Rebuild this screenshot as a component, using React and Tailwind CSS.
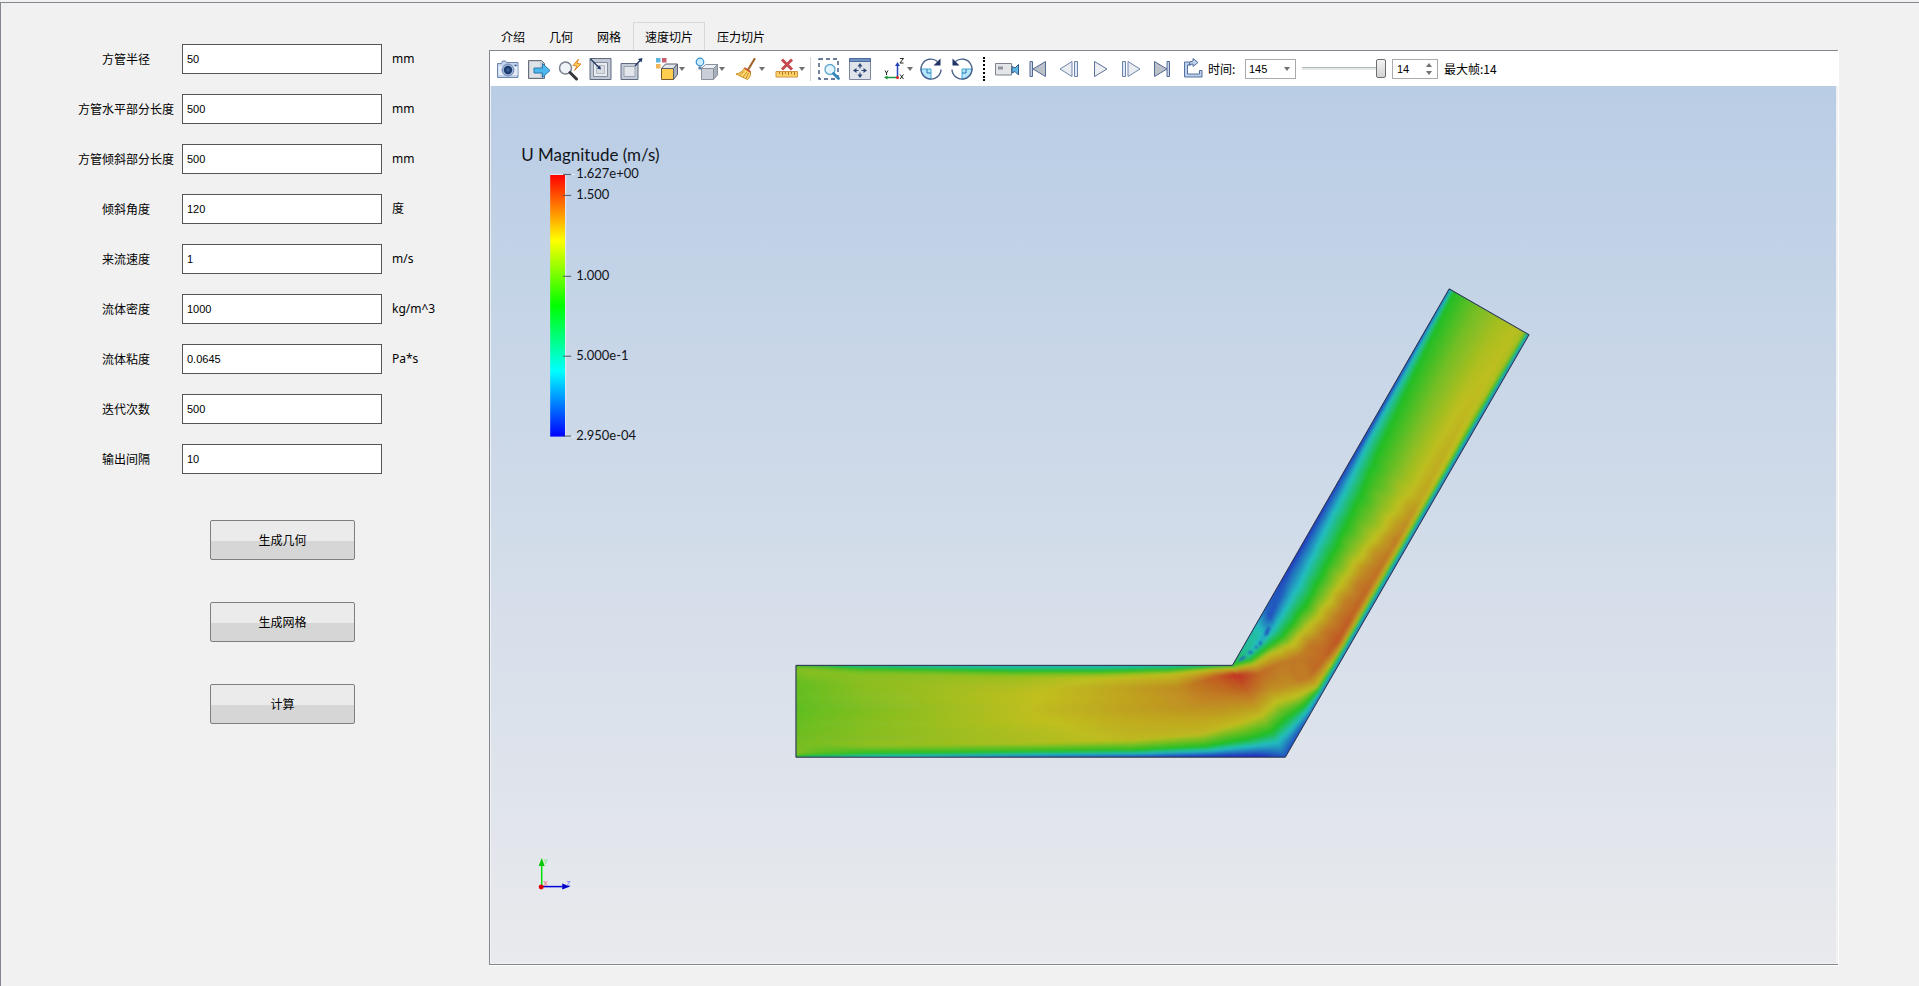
import React, { useState } from 'react';

const FIELDS = [
  { id: 'radius', label: '方管半径', value: '50', unit: 'mm' },
  { id: 'flatLength', label: '方管水平部分长度', value: '500', unit: 'mm' },
  { id: 'slopeLength', label: '方管倾斜部分长度', value: '500', unit: 'mm' },
  { id: 'angle', label: '倾斜角度', value: '120', unit: '度' },
  { id: 'velocity', label: '来流速度', value: '1', unit: 'm/s' },
  { id: 'density', label: '流体密度', value: '1000', unit: 'kg/m^3' },
  { id: 'viscosity', label: '流体粘度', value: '0.0645', unit: 'Pa*s' },
  { id: 'iterations', label: '迭代次数', value: '500', unit: '' },
  { id: 'interval', label: '输出间隔', value: '10', unit: '' },
];

const ACTIONS = ['生成几何', '生成网格', '计算'];
const TABS = ['介绍', '几何', '网格', '速度切片', '压力切片'];

// Cross-section profiles along the duct. s: 0 inlet, 1 bend, 2 outlet.
// n: position from upper wall to lower wall, v: normalised speed.
const STATIONS = [
  { s: 0, n: [0, 0.01, 0.02, 0.04, 0.08, 0.2, 0.5, 0.85, 0.96, 0.98, 1], v: [0.5, 0.58, 0.62, 0.65, 0.64, 0.61, 0.6, 0.63, 0.66, 0.6, 0.5] },
  { s: 0.03, n: [0, 0.01, 0.02, 0.04, 0.08, 0.2, 0.5, 0.85, 0.96, 0.98, 1], v: [0.35, 0.5, 0.6, 0.65, 0.66, 0.62, 0.61, 0.64, 0.62, 0.5, 0.35] },
  { s: 0.15, n: [0, 0.02, 0.035, 0.06, 0.1, 0.2, 0.5, 0.88, 0.97, 0.985, 1], v: [0.25, 0.4, 0.5, 0.6, 0.66, 0.67, 0.65, 0.67, 0.5, 0.35, 0.2] },
  { s: 0.5, n: [0, 0.03, 0.065, 0.09, 0.13, 0.25, 0.5, 0.85, 0.945, 0.975, 1], v: [0.2, 0.33, 0.5, 0.6, 0.69, 0.735, 0.75, 0.72, 0.5, 0.25, 0.08] },
  { s: 0.7, n: [0, 0.03, 0.065, 0.1, 0.14, 0.25, 0.5, 0.81, 0.93, 0.965, 1], v: [0.2, 0.33, 0.5, 0.65, 0.75, 0.785, 0.79, 0.76, 0.5, 0.25, 0.04] },
  { s: 0.85, n: [0, 0.02, 0.05, 0.08, 0.11, 0.25, 0.45, 0.75, 0.885, 0.935, 1], v: [0.22, 0.35, 0.5, 0.66, 0.76, 0.83, 0.82, 0.76, 0.5, 0.25, 0] },
  { s: 0.95, n: [0, 0.01, 0.02, 0.04, 0.06, 0.13, 0.3, 0.62, 0.8, 0.88, 1], v: [0.3, 0.4, 0.5, 0.68, 0.78, 0.91, 0.87, 0.76, 0.5, 0.25, 0] },
  { s: 1, n: [0, 0.01, 0.02, 0.03, 0.05, 0.1, 0.26, 0.54, 0.73, 0.84, 1], v: [0.4, 0.5, 0.6, 0.7, 0.8, 0.98, 0.9, 0.76, 0.5, 0.25, 0.08] },
  { s: 1.05, n: [0, 0.05, 0.1, 0.15, 0.2, 0.3, 0.48, 0.63, 0.8, 0.91, 1], v: [0.3, 0.33, 0.28, 0.5, 0.76, 0.89, 0.83, 0.74, 0.5, 0.25, 0.06] },
  { s: 1.1, n: [0, 0.08, 0.15, 0.23, 0.3, 0.42, 0.65, 0.79, 0.9, 0.96, 1], v: [0.28, 0.3, 0.2, 0.5, 0.75, 0.86, 0.83, 0.74, 0.5, 0.25, 0.12] },
  { s: 1.15, n: [0, 0.1, 0.2, 0.32, 0.43, 0.58, 0.8, 0.91, 0.95, 0.98, 1], v: [0.12, 0.07, 0.25, 0.5, 0.74, 0.86, 0.87, 0.76, 0.5, 0.25, 0.1] },
  { s: 1.25, n: [0, 0.07, 0.2, 0.37, 0.55, 0.7, 0.87, 0.93, 0.96, 0.98, 1], v: [0.02, 0.12, 0.25, 0.5, 0.75, 0.85, 0.92, 0.8, 0.5, 0.25, 0.1] },
  { s: 1.4, n: [0, 0.04, 0.14, 0.33, 0.61, 0.73, 0.87, 0.93, 0.96, 0.98, 1], v: [0.02, 0.1, 0.25, 0.5, 0.75, 0.83, 0.88, 0.78, 0.5, 0.25, 0.1] },
  { s: 1.5, n: [0, 0.04, 0.12, 0.29, 0.67, 0.77, 0.88, 0.93, 0.96, 0.98, 1], v: [0.03, 0.12, 0.26, 0.5, 0.74, 0.8, 0.85, 0.77, 0.5, 0.25, 0.1] },
  { s: 1.6, n: [0, 0.03, 0.07, 0.22, 0.6, 0.77, 0.87, 0.93, 0.96, 0.98, 1], v: [0.03, 0.1, 0.25, 0.5, 0.69, 0.76, 0.79, 0.75, 0.5, 0.25, 0.08] },
  { s: 1.8, n: [0, 0.02, 0.05, 0.13, 0.4, 0.72, 0.85, 0.92, 0.96, 0.98, 1], v: [0.04, 0.12, 0.27, 0.5, 0.63, 0.745, 0.76, 0.73, 0.5, 0.25, 0.08] },
  { s: 2, n: [0, 0.015, 0.03, 0.06, 0.35, 0.65, 0.85, 0.94, 0.97, 0.985, 1], v: [0.06, 0.17, 0.32, 0.5, 0.63, 0.71, 0.74, 0.71, 0.5, 0.3, 0.1] },
];

const OUTLINE = '796,666 1233,666 1450,289 1530,335 1286,758 796,758';

const lerp = (a, b, t) => a + (b - a) * t;

function profileAt(s) {
  let i = 0;
  while (i < STATIONS.length - 2 && STATIONS[i + 1].s < s) i++;
  const a = STATIONS[i];
  const b = STATIONS[i + 1];
  const t = (s - a.s) / (b.s - a.s);
  return {
    n: a.n.map((n, k) => lerp(n, b.n[k], t)),
    v: a.v.map((v, k) => lerp(v, b.v[k], t)),
  };
}

function sample({ n, v }, x) {
  let i = 0;
  while (i < n.length - 2 && n[i + 1] < x) i++;
  const t = (x - n[i]) / (n[i + 1] - n[i]);
  return lerp(v[i], v[i + 1], Math.min(1, Math.max(0, t)));
}

const RAMP = [[34, 34, 190], [34, 192, 192], [34, 192, 34], [194, 192, 32], [196, 34, 34]];

function speedColor(v) {
  const p = Math.min(0.999, Math.max(0, v)) * 4;
  const i = Math.floor(p);
  const [r, g, b] = RAMP[i].map((c, k) => Math.round(lerp(c, RAMP[i + 1][k], p - i)));
  return `rgb(${r},${g},${b})`;
}

function ductPoint(s, n) {
  const wall = s <= 1
    ? [796 + 437 * s, 666, 796 + 490 * s, 758]
    : [1233 + 217 * (s - 1), 666 - 377 * (s - 1), 1286 + 244 * (s - 1), 758 - 423 * (s - 1)];
  return [lerp(wall[0], wall[2], n), lerp(wall[1], wall[3], n)];
}

const COLS = 220;
const ROWS = 60;

function buildCells() {
  const cells = [];
  for (let c = 0; c < COLS; c++) {
    const s0 = (c / COLS) * 2;
    const s1 = ((c + 1) / COLS) * 2;
    const mid = (s0 + s1) / 2;
    const profile = profileAt(mid);
    for (let r = 0; r < ROWS; r++) {
      const n0 = r / ROWS;
      const n1 = (r + 1) / ROWS;
      const n = (n0 + n1) / 2;
      // the shear layer behind the bend is slightly ragged
      const ragged = mid > 1.12 && mid < 1.6
        ? (Math.sin(mid * 97 + n * 9) + Math.sin(mid * 161 - n * 14)) * 0.005 * Math.sin(n * Math.PI)
        : 0;
      cells.push({
        points: [ductPoint(s0, n0), ductPoint(s1, n0), ductPoint(s1, n1), ductPoint(s0, n1)]
          .map(([x, y]) => `${x.toFixed(1)},${y.toFixed(1)}`).join(' '),
        color: speedColor(sample(profile, n) + ragged),
      });
    }
  }
  return cells;
}

const CELLS = buildCells();

const TICKS = [
  { y: 174, text: '1.627e+00' },
  { y: 195, text: '1.500' },
  { y: 276, text: '1.000' },
  { y: 356, text: '5.000e-1' },
  { y: 436, text: '2.950e-04' },
];

function FlowScene() {
  return (
    <svg viewBox="491 86 1346 878" className="absolute inset-0 h-full w-full" role="img" aria-label="U Magnitude (m/s)">
      <defs>
        <linearGradient id="legend" x1="0" y1="0" x2="0" y2="1">
          <stop offset="0" stopColor="#ff0000" />
          <stop offset="0.25" stopColor="#ffff00" />
          <stop offset="0.5" stopColor="#00ff00" />
          <stop offset="0.75" stopColor="#00ffff" />
          <stop offset="1" stopColor="#0000ff" />
        </linearGradient>
        <clipPath id="duct"><polygon points={OUTLINE} /></clipPath>
        <filter id="smooth" x="-2%" y="-2%" width="104%" height="104%"><feGaussianBlur stdDeviation="0.8" /></filter>
      </defs>

      <g clipPath="url(#duct)">
        <polygon points={OUTLINE} fill="#2262be" />
        <g filter="url(#smooth)" strokeWidth="0.8">
          {CELLS.map((cell, i) => (
            <polygon key={i} points={cell.points} fill={cell.color} stroke={cell.color} />
          ))}
          <g fill="#2258be">
            <ellipse cx="1243" cy="659" rx="4" ry="1.3" transform="rotate(-35 1243 659)" />
            <ellipse cx="1251" cy="653" rx="2.5" ry="1.6" />
            <ellipse cx="1257" cy="648" rx="1.6" ry="1.4" />
            <ellipse cx="1261" cy="644" rx="1.6" ry="2.4" />
            <ellipse cx="1268" cy="632" rx="2" ry="5" transform="rotate(25 1268 632)" />
          </g>
        </g>
      </g>
      <polygon points={OUTLINE} fill="none" stroke="#2b2f4a" />

      <g className="font-['Lato',sans-serif]" fill="#10141a">
        <text x="521" y="161" fontSize="17">U Magnitude (m/s)</text>
        <rect x="550" y="175" width="15" height="262" fill="url(#legend)" />
        <path d="M550.5 174.5H575M565.5 175V437H575" fill="none" stroke="#e8ecf4" />
        {TICKS.map((tick) => (
          <g key={tick.text}>
            <path d={`M563 ${tick.y + 0.5}H571`} stroke="#4d5560" />
            <text x="576" y={tick.y + 4} fontSize="13">{tick.text}</text>
          </g>
        ))}
      </g>

      <g className="font-['Liberation_Sans',sans-serif]" fontSize="7">
        <path d="M541.5 887V866" stroke="#00e000" strokeWidth="1.5" />
        <path d="M541.5 859l3 8h-6z" fill="#00c800" />
        <path d="M542 887.5H562" stroke="#0000d8" strokeWidth="1.5" />
        <path d="M570 887.5l-8 -3v6z" fill="#0000c8" />
        <circle cx="541" cy="888" r="2.5" fill="#e00000" />
        <text x="543" y="865" fill="#5ee65e">Y</text>
        <text x="543" y="887" fill="#f06060">X</text>
        <text x="566" y="887" fill="#6a6af0">Z</text>
      </g>
    </svg>
  );
}

function Icon({ children }) {
  return (
    <svg viewBox="0 0 24 24" className="h-6 w-6 shrink-0" fill="none" aria-hidden="true">{children}</svg>
  );
}

const CameraIcon = (
  <Icon>
    <path d="M1.5 6.5h4l1-2.500h3l1 1.500h11.500v15h-20.500z" fill="#c3d3ec" stroke="#6d84ad" strokeLinejoin="round" />
    <path d="M2.500 9h19v9h-19z" fill="#e4ecf8" />
    <circle cx="12" cy="13" r="6" fill="#9fb4d6" stroke="#7189b4" />
    <circle cx="12" cy="13" r="4.200" fill="#1d3a6c" />
    <circle cx="12" cy="13" r="1.800" fill="#3b629f" />
    <path d="M18.500 8.500h2" stroke="#2f4f86" strokeWidth="1.500" />
  </Icon>
);
const ExportIcon = (
  <Icon>
    <path d="M1.500 3.500h13l3 3v15h-16z" fill="#c6cbd3" stroke="#6a707b" />
    <path d="M3 5h10v15h-10z" fill="#dfe3e8" />
    <path d="M7 11h8.500v-4.500l7.500 7-7.500 7v-4.500h-8.500z" fill="#4db8ee" stroke="#2879ad" />
  </Icon>
);
const FlashSearchIcon = (
  <Icon>
    <circle cx="7.500" cy="11" r="6" fill="#eef3f8" stroke="#7b828d" strokeWidth="1.500" />
    <path d="M12 15.500l6.500 6.500" stroke="#33373d" strokeWidth="3" strokeLinecap="round" />
    <path d="M20.500 2l-5.500 6.500 4 .5-2.500 4.500 6.500-6.500-4-.5z" fill="#ffd45a" stroke="#e0812b" />
  </Icon>
);
const CornerInIcon = (
  <Icon>
    <path d="M1 1.500h21v21h-21z" fill="#c2c9d5" stroke="#5f6b80" />
    <path d="M4.500 5.500h14v14h-14z" fill="#e8ebf0" stroke="#828da0" />
    <path d="M7.500 8.500h8v8h-8z" fill="#d8dce3" stroke="#b3bac5" />
    <path d="M1.500 2l9 9" stroke="#1f3564" strokeWidth="1.300" />
    <path d="M12 12.500l-4-1 3-3z" fill="#1f3564" />
  </Icon>
);
const CornerOutIcon = (
  <Icon>
    <path d="M1 6.500h17v16h-17z" fill="#c6ccd7" stroke="#5f6b80" />
    <path d="M4 9.500h11v10h-11z" fill="#e3e7ec" stroke="#9aa3b2" />
    <path d="M15 9l5.500-6" stroke="#1f3564" strokeWidth="1.300" />
    <path d="M22.500 1l-1 4.500-3.500-3.500z" fill="#1f3564" />
  </Icon>
);
const ColorCubeIcon = (
  <Icon>
    <path d="M1 1h4.500v4.500h-4.500z" fill="#5bb5dc" />
    <path d="M7 1h4.500v4.500h-4.500z" fill="#c66072" />
    <path d="M1 7h4.500v4.500h-4.500z" fill="#f2b457" />
    <path d="M6.500 11.500h12v11h-12z" fill="#ffce4e" stroke="#7a5a2c" />
    <path d="M6.500 11.500l4-4.500h12l-4 4.500z" fill="#e1e5ec" stroke="#59606c" />
    <path d="M18.500 11.500l4-4.500v10.500l-4 5z" fill="#a9b1bf" stroke="#59606c" />
  </Icon>
);
const LightCubeIcon = (
  <Icon>
    <path d="M6.500 11.500h12v11h-12z" fill="#c9ced7" stroke="#8a919d" />
    <path d="M6.500 11.500l4-4h12l-4 4z" fill="#eceff3" stroke="#8a919d" />
    <path d="M18.500 11.500l4-4v10.500l-4 4.500z" fill="#a8b0bc" stroke="#8a919d" />
    <circle cx="5" cy="5" r="3.800" fill="#c8edff" stroke="#3c8fd0" strokeWidth="1.200" />
    <path d="M3.500 9.500h3v3h-3z" fill="#5c7ca6" />
  </Icon>
);
const BroomIcon = (
  <Icon>
    <path d="M19.500 2l-6 10" stroke="#a4682f" strokeWidth="2.200" strokeLinecap="round" />
    <path d="M9.500 11l6 4c.5 3-1 6-3 7.500l-11.500-5.500c4-.5 6.500-3 8.500-6z" fill="#ffd76a" stroke="#c98e2c" />
    <path d="M4.500 18l5-4M8 20l4-5M11 21.500l2.500-5.500" stroke="#c98e2c" />
    <path d="M9.500 11l6 4" stroke="#c7552e" strokeWidth="1.800" />
  </Icon>
);
const RulerClearIcon = (
  <Icon>
    <path d="M1 14.500h21.500v5.500h-21.500z" fill="#ffd267" stroke="#cf9540" />
    <path d="M4.500 15v2M7.500 15v3M10.500 15v2M13.500 15v3M16.500 15v2M19.500 15v3" stroke="#b0782a" />
    <path d="M7 2.500l10 10M17 2.500l-10 10" stroke="#c44a50" strokeWidth="3" />
  </Icon>
);
const BoxZoomIcon = (
  <Icon>
    <path d="M2 2h19v20h-19z" stroke="#3b5078" strokeWidth="1.400" strokeDasharray="4 3" />
    <circle cx="13" cy="12.500" r="5" fill="#e5f5fd" stroke="#5aa6cf" strokeWidth="1.300" />
    <path d="M16.500 16.500l5 5" stroke="#3488bf" strokeWidth="2.800" strokeLinecap="round" />
  </Icon>
);
const PanIcon = (
  <Icon>
    <path d="M1.500 1.500h21v21h-21z" fill="#dfe3ea" stroke="#7a869b" />
    <path d="M1.500 1.500h21v3h-21z" fill="#6f93c7" stroke="#4e6a99" />
    <path d="M12 6l2.500 3.500h-5zM12 21l2.500-3.500h-5zM5 13.500l3.500-2.500v5zM19 13.500l-3.500-2.500v5z" fill="#2b4676" />
    <path d="M12 9v2.500M12 15.500v2.500M8 13.500h2.500M13.500 13.500h2.500" stroke="#2b4676" />
  </Icon>
);
const AxesIcon = (
  <Icon>
    <path d="M14.500 20v-12" stroke="#2346b8" strokeWidth="1.500" />
    <path d="M14.500 5l2.500 4h-5z" fill="#2346b8" />
    <path d="M14 20.500h-10" stroke="#1e9440" strokeWidth="1.500" />
    <path d="M1 20.500l3.500-2v4z" fill="#1e9440" />
    <circle cx="14.500" cy="20.500" r="1.500" fill="#e02020" />
    <path d="M17 1.500h3.500l-3.500 4.500h3.500M2 13.500l1.500 2.500 1.500-2.500M3.500 16v2M17 17.500l3.500 4.500M20.500 17.500l-3.500 4.500" stroke="#222" />
  </Icon>
);
const RotateRightIcon = (
  <Icon>
    <path d="M2 12h10v10a10 10 0 0 1-10-10z" fill="#b5e6fb" stroke="#43a6d8" />
    <path d="M8 12v4h4" stroke="#2b79ad" />
    <path d="M18.500 4.500a10 10 0 1 0 3.500 8" stroke="#49628c" strokeWidth="1.400" />
    <path d="M21.500 1.500v7h-7z" fill="#1f3564" />
  </Icon>
);
const RotateLeftIcon = (
  <Icon>
    <path d="M22 12h-10v10a10 10 0 0 0 10-10z" fill="#b5e6fb" stroke="#43a6d8" />
    <path d="M16 12v4h-4" stroke="#2b79ad" />
    <path d="M5.500 4.500a10 10 0 1 1-3.500 8" stroke="#49628c" strokeWidth="1.400" />
    <path d="M2.500 1.500v7h7z" fill="#1f3564" />
  </Icon>
);
const VideoIcon = (
  <Icon>
    <path d="M.5 6.500h16v11.500h-16z" fill="#e3e5e9" stroke="#7d828c" />
    <path d="M3 9.500h5v3h-5z" fill="#8e949f" />
    <path d="M17 9.500l3 1.500 3.500-3.500v10.500l-3.500-3.500-3 1.500z" fill="#62b7e2" stroke="#2d5a8c" />
  </Icon>
);
const FirstIcon = (
  <Icon>
    <path d="M4 4.500h2.500v15h-2.500z" fill="#c8d3e6" stroke="#536a94" />
    <path d="M19.500 4.500v15l-12.500-7.500z" fill="#bcc1c9" stroke="#536a94" />
  </Icon>
);
const PrevIcon = (
  <Icon>
    <path d="M15 4.500v15l-12-7.500z" fill="#e9ecf1" stroke="#7084aa" />
    <path d="M17.500 4.500h3v15h-3z" fill="#e0e8f5" stroke="#7084aa" />
  </Icon>
);
const PlayIcon = (
  <Icon><path d="M6.500 4.500v15l12.500-7.500z" fill="#eceef2" stroke="#5d7299" /></Icon>
);
const NextIcon = (
  <Icon>
    <path d="M3.500 4.500h3v15h-3z" fill="#e0e8f5" stroke="#7084aa" />
    <path d="M9 4.500v15l12-7.500z" fill="#e9ecf1" stroke="#7084aa" />
  </Icon>
);
const LastIcon = (
  <Icon>
    <path d="M4.500 4.500v15l12.500-7.500z" fill="#bcc1c9" stroke="#536a94" />
    <path d="M17 4.500h2.500v15h-2.500z" fill="#c8d3e6" stroke="#536a94" />
  </Icon>
);
const LoopIcon = (
  <Icon>
    <path d="M10 5h-6.500v15h17.500v-6.500h-2.500v3.500h-12v-9h3.500z" fill="#bcd0ea" stroke="#55719f" />
    <path d="M8 8q0-4 4-4v-2.500l5 4-5 4v-2.500q-2 0-4 1z" fill="#bcd0ea" stroke="#55719f" />
  </Icon>
);

function ToolButton({ label, icon, menu }) {
  return (
    <button
      type="button"
      aria-label={label}
      className={menu ? 'flex h-8 w-10 items-center justify-end pr-0.5' : 'flex h-8 w-[31px] items-center justify-center'}
    >
      {icon}
      {menu && (
        <svg viewBox="0 0 6 4" className="h-1 w-1.5 shrink-0" aria-hidden="true">
          <path d="M0 0h6l-3 4z" fill="#707070" />
        </svg>
      )}
    </button>
  );
}

function Toolbar() {
  const [frame, setFrame] = useState('14');

  return (
    <div className="flex h-[35px] items-center bg-white pl-0.5">
      <ToolButton label="截图" icon={CameraIcon} />
      <ToolButton label="导出" icon={ExportIcon} />
      <ToolButton label="快速查找" icon={FlashSearchIcon} />
      <ToolButton label="缩放到数据" icon={CornerInIcon} />
      <ToolButton label="缩小到窗口" icon={CornerOutIcon} />
      <ToolButton label="着色" icon={ColorCubeIcon} menu />
      <ToolButton label="光照" icon={LightCubeIcon} menu />
      <ToolButton label="清除" icon={BroomIcon} menu />
      <ToolButton label="清除标尺" icon={RulerClearIcon} menu />
      <div className="mr-0.5 ml-[3px] h-6 w-px bg-gray-300" />
      <ToolButton label="框选缩放" icon={BoxZoomIcon} />
      <ToolButton label="适应窗口" icon={PanIcon} />
      <ToolButton label="视角" icon={AxesIcon} menu />
      <ToolButton label="顺时针旋转" icon={RotateRightIcon} />
      <ToolButton label="逆时针旋转" icon={RotateLeftIcon} />
      <div className="mx-1.5 h-6 border-l-2 border-dotted border-black" />
      <ToolButton label="录制" icon={VideoIcon} />
      <ToolButton label="第一帧" icon={FirstIcon} />
      <ToolButton label="上一帧" icon={PrevIcon} />
      <ToolButton label="播放" icon={PlayIcon} />
      <ToolButton label="下一帧" icon={NextIcon} />
      <ToolButton label="最后一帧" icon={LastIcon} />
      <ToolButton label="循环" icon={LoopIcon} />

      <label htmlFor="time" className="w-[37px] shrink-0 whitespace-nowrap">时间:</label>
      <div className="relative shrink-0">
        <select
          id="time"
          defaultValue="145"
          className="block h-5 w-[51px] appearance-none border border-[#aaaaaa] bg-white pl-[3px] font-['Liberation_Sans','Noto_Sans_CJK_SC',sans-serif] text-[11px] leading-4"
        >
          <option>145</option>
        </select>
        <svg viewBox="0 0 6 4" className="pointer-events-none absolute top-2 right-1.5 h-1 w-1.5" aria-hidden="true">
          <path d="M0 0h6l-3 4z" fill="#707070" />
        </svg>
      </div>
      <input
        type="range"
        aria-label="帧"
        min="0"
        max="14"
        value={frame}
        onChange={(e) => setFrame(e.target.value)}
        className="mx-1.5 h-5 w-[84px] shrink-0 appearance-none bg-transparent [&::-webkit-slider-runnable-track]:h-[3px] [&::-webkit-slider-runnable-track]:border-t [&::-webkit-slider-runnable-track]:border-[#b4b8b8] [&::-webkit-slider-runnable-track]:bg-[#e4e8e8] [&::-webkit-slider-thumb]:-mt-[9px] [&::-webkit-slider-thumb]:h-[19px] [&::-webkit-slider-thumb]:w-[10px] [&::-webkit-slider-thumb]:appearance-none [&::-webkit-slider-thumb]:rounded-xs [&::-webkit-slider-thumb]:border [&::-webkit-slider-thumb]:border-[#6e6e6e] [&::-webkit-slider-thumb]:bg-linear-to-b [&::-webkit-slider-thumb]:from-[#f4f4f4] [&::-webkit-slider-thumb]:to-[#d2d2d2]"
      />
      <div className="relative shrink-0">
        <input
          type="text"
          aria-label="当前帧"
          value={frame}
          onChange={(e) => setFrame(e.target.value)}
          className="block h-5 w-[46px] border border-[#aaaaaa] bg-white pl-1 font-['Liberation_Sans','Noto_Sans_CJK_SC',sans-serif] text-[11px] leading-4"
        />
        <svg viewBox="0 0 6 12" className="pointer-events-none absolute top-1 right-1.5 h-3 w-1.5" aria-hidden="true">
          <path d="M0 4l3-4 3 4zM0 8h6l-3 4z" fill="#707070" />
        </svg>
      </div>
      <span className="ml-1.5 whitespace-nowrap">最大帧:14</span>
    </div>
  );
}

function ParameterForm() {
  return (
    <form className="w-[488px] shrink-0 pt-[41px]" onSubmit={(e) => e.preventDefault()}>
      <div className="flex flex-col gap-5">
        {FIELDS.map((field) => (
          <div key={field.id} className="flex h-[30px] items-center">
            <label htmlFor={field.id} className="ml-[69px] w-28 text-center whitespace-nowrap">{field.label}</label>
            <input
              id={field.id}
              type="text"
              defaultValue={field.value}
              className="h-[30px] w-[200px] border border-[#555555] bg-white px-1 font-['Liberation_Sans','Noto_Sans_CJK_SC',sans-serif] text-[11px] text-black"
            />
            <span className="ml-2.5 font-['Noto_Sans','Noto_Sans_CJK_SC',sans-serif]">{field.unit}</span>
          </div>
        ))}
      </div>
      <div className="mt-[46px] ml-[209px] flex flex-col gap-[42px]">
        {ACTIONS.map((action) => (
          <button
            key={action}
            type="button"
            className="h-10 w-[145px] rounded-xs border border-[#7f7f7f] bg-linear-to-b from-[#ebebeb] from-52% to-[#d6d6d6] to-52% text-center"
          >
            {action}
          </button>
        ))}
      </div>
    </form>
  );
}

export default function App() {
  const [tab, setTab] = useState('速度切片');

  return (
    <div className="flex min-h-screen flex-col bg-[#f1f1f1] pt-0.5 font-['Noto_Sans_CJK_SC',sans-serif] text-xs text-black">
      <div className="flex flex-1 border-t border-l border-[#828790]">
        <ParameterForm />
        <main className="mr-20 mb-5 flex min-w-0 flex-1 flex-col pt-[19px]">
          <div role="tablist" className="flex h-7">
            {TABS.map((name) => (
              <button
                key={name}
                type="button"
                role="tab"
                aria-selected={tab === name}
                onClick={() => setTab(name)}
                className={
                  tab === name
                    ? 'border border-b-0 border-[#d9d9d9] px-[11px] pt-px whitespace-nowrap'
                    : 'px-3 pt-0.5 whitespace-nowrap'
                }
              >
                {name}
              </button>
            ))}
          </div>
          <div className="flex flex-1 border-r border-b border-white">
            <div className="flex min-w-0 flex-1 flex-col border border-r-0 border-[#828790] pb-px">
              <Toolbar />
              <div className="relative mr-0.5 ml-px flex-1 overflow-hidden bg-linear-to-b from-[#b9cde5] to-[#e9eaed]">
                <FlowScene />
              </div>
            </div>
          </div>
        </main>
      </div>
    </div>
  );
}
